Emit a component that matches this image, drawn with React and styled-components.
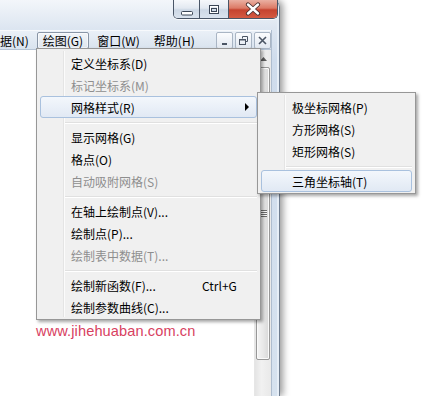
import React from 'react';
import styled, { createGlobalStyle } from 'styled-components';

const GlobalStyle = createGlobalStyle`
  html, body {
    margin: 0;
    padding: 0;
    background: #ffffff;
  }
  body {
    width: 435px;
    height: 396px;
    overflow: hidden;
    font-family: "Noto Sans CJK SC", "Noto Sans", sans-serif;
  }
`;

const Page = styled.div`
  display: flex;
  width: 435px;
  height: 396px;
  overflow: hidden;
  background: #ffffff;
`;

const Window = styled.div`
  position: relative;
  flex: none;
  width: 280px;
  height: 396px;
  box-sizing: border-box;
  display: flex;
  flex-direction: column;
  background: linear-gradient(#f3f6fa, #dde6f1 28px, #cfdcec 60px, #d6e2ef);
  border-top-right-radius: 7px;
  box-shadow: inset -1px 0 0 #6f7d8f, inset -3px 0 0 #e6eef7, 3px 0 7px rgba(0, 0, 0, 0.4);
`;

const TitleBar = styled.div`
  height: 30px;
  flex: none;
  display: flex;
  justify-content: flex-end;
  align-items: flex-start;
  padding-right: 2px;
`;

const CaptionGroup = styled.div`
  display: flex;
  height: 18px;
  border: 1px solid #4a5667;
  border-top: none;
  border-radius: 0 0 5px 5px;
  overflow: hidden;
  box-shadow: 0 1px 0 rgba(255, 255, 255, 0.8);
`;

const CaptionButton = styled.div`
  width: ${p => p.$w}px;
  display: flex;
  align-items: center;
  justify-content: center;
  background: ${p => (p.$close
    ? 'linear-gradient(#eab0a2, #dc7a66 45%, #c5432f 55%, #d45a42)'
    : 'linear-gradient(#f6f8fb, #e3e9f1 45%, #cdd8e5 55%, #dae3ee)')};
  & + & {
    border-left: 1px solid #4a5667;
  }
`;

const Client = styled.div`
  flex: 1;
  min-height: 0;
  display: flex;
  flex-direction: column;
  margin-right: 8px;
  border-right: 1px solid #aebdcf;
`;

const MenuBar = styled.div`
  height: 18px;
  flex: none;
  display: flex;
  align-items: center;
  background: linear-gradient(#eaf0f7, #d9e3ee);
  border-top: 1px solid #f7f9fc;
  border-bottom: 1px solid #b7c4d4;
  font-size: 12px;
  color: #000;
`;

const BarItem = styled.div`
  height: 15px;
  padding: 0 5px;
  display: flex;
  align-items: center;
  white-space: nowrap;
  border: 1px solid ${p => (p.$open ? '#8995a6' : 'transparent')};
  border-radius: 2px;
  background: ${p => (p.$open ? 'linear-gradient(#f1f4f8, #dfe6ee)' : 'none')};
  box-shadow: ${p => (p.$open ? 'inset 0 0 0 1px rgba(255,255,255,0.6)' : 'none')};
  & + & {
    margin-left: 2px;
  }
  &:first-child {
    margin-left: -18px;
  }
`;

const MdiButtons = styled.div`
  margin-left: auto;
  display: flex;
  gap: 2px;
`;

const MdiButton = styled.div`
  width: 15px;
  height: 15px;
  border: 1px solid #a9b5c4;
  border-radius: 2px;
  background: linear-gradient(#fbfcfe, #e2e8f0);
  display: flex;
  align-items: center;
  justify-content: center;
`;

const Body = styled.div`
  flex: 1;
  min-height: 0;
  display: flex;
  background: #ffffff;
`;

const Document = styled.div`
  flex: 1;
  padding: 272px 0 0 36px;
`;

const Url = styled.div`
  font-family: "Liberation Sans", Arial, sans-serif;
  font-size: 14.6px;
  line-height: 18px;
  color: #d8415f;
  letter-spacing: 0.1px;
`;

const Scrollbar = styled.div`
  width: 16px;
  flex: none;
  display: flex;
  flex-direction: column;
  background: linear-gradient(90deg, #e4e4e4, #f1f1f1 40%, #e9e9e9);
  border-left: 1px solid #e6e6e6;
`;

const ScrollArrow = styled.div`
  height: 17px;
  display: flex;
  align-items: center;
  justify-content: center;
`;

const Thumb = styled.div`
  height: 291px;
  margin: 0 1px;
  border: 1px solid #979797;
  border-radius: 2px;
  background: linear-gradient(90deg, #f4f4f4, #e8e8e8 50%, #d8d8d8);
  box-shadow: inset 0 0 0 1px #fafafa;
  display: flex;
  align-items: center;
  justify-content: center;
`;

const Grip = styled.div`
  width: 7px;
  height: 7px;
  background: repeating-linear-gradient(#6d6d6d 0 1px, #f6f6f6 1px 2px);
`;

const Menu = styled.div`
  position: absolute;
  z-index: ${p => p.$z || 2};
  left: ${p => p.$left}px;
  top: ${p => p.$top}px;
  width: ${p => p.$width}px;
  box-sizing: border-box;
  padding: 3px 3px 1px;
  background: #f0f0f0;
  border: 1px solid #979797;
  box-shadow: 2px 2px 3px rgba(0, 0, 0, 0.35);
  font-size: 12px;
  &::before {
    content: '';
    position: absolute;
    left: 26px;
    top: 2px;
    bottom: 2px;
    width: 1px;
    background: #e4e4e4;
    box-shadow: 1px 0 0 #fbfbfb;
  }
`;

const Item = styled.div`
  position: relative;
  height: 22px;
  box-sizing: border-box;
  padding-left: 30px;
  display: flex;
  align-items: center;
  white-space: nowrap;
  border: 1px solid ${p => (p.$active ? '#a9c1de' : 'transparent')};
  border-radius: 3px;
  background: ${p => (p.$active ? 'linear-gradient(#f3f7fc, #e1e9f4)' : 'transparent')};
  color: ${p => (p.$disabled ? '#8e8e8e' : '#000')};
`;

const Shortcut = styled.span`
  margin-left: auto;
  width: 54px;
`;

const SubArrow = styled.span`
  position: absolute;
  right: 7px;
  top: 6px;
  width: 0;
  height: 0;
  border-top: 4px solid transparent;
  border-bottom: 4px solid transparent;
  border-left: 4px solid #000;
`;

const Separator = styled.div`
  height: 8px;
  margin-left: 23px;
  display: flex;
  align-items: center;
  &::after {
    content: '';
    flex: 1;
    height: 1px;
    background: #e0e0e0;
    box-shadow: 0 1px 0 #ffffff;
  }
`;

const SubMenu = styled(Menu)`
  left: 216px;
  top: -5px;
  z-index: 3;
`;

const MinGlyph = () => (
  <svg width="14" height="16" viewBox="0 0 14 16">
    <rect x="1.5" y="10.5" width="11" height="3.5" rx="1" fill="#fff" stroke="#3b4656" />
  </svg>
);

const MaxGlyph = () => (
  <svg width="14" height="14" viewBox="0 0 14 14">
    <rect x="2.5" y="3.5" width="9" height="8" fill="none" stroke="#3b4656" />
    <rect x="3.5" y="4.5" width="7" height="6" fill="none" stroke="#fff" />
    <rect x="4.5" y="6.5" width="5" height="3" fill="none" stroke="#3b4656" />
  </svg>
);

const CloseGlyph = () => (
  <svg width="16" height="14" viewBox="0 0 16 14">
    <path d="M3 2.5 L13 11.5 M13 2.5 L3 11.5" stroke="#4a3030" strokeWidth="4.2" strokeLinecap="round" />
    <path d="M3 2.5 L13 11.5 M13 2.5 L3 11.5" stroke="#ffffff" strokeWidth="2.4" strokeLinecap="round" />
  </svg>
);

const MdiMin = () => (
  <svg width="9" height="9" viewBox="0 0 9 9">
    <rect x="2" y="7" width="5" height="2" fill="#4b5564" />
  </svg>
);

const MdiRestore = () => (
  <svg width="9" height="9" viewBox="0 0 9 9">
    <path d="M3.5 2.5 V0.5 H8.5 V5.5 H6.5" fill="none" stroke="#4b5564" />
    <rect x="0.5" y="3.5" width="6" height="5" fill="none" stroke="#4b5564" />
    <rect x="0.5" y="3.5" width="6" height="1" fill="#4b5564" />
  </svg>
);

const MdiClose = () => (
  <svg width="9" height="9" viewBox="0 0 9 9">
    <path d="M1 1 L8 8 M8 1 L1 8" stroke="#4b5564" strokeWidth="1.6" />
  </svg>
);

const UpArrow = () => (
  <svg width="7" height="4" viewBox="0 0 7 4">
    <path d="M0 4 L3.5 0 L7 4 Z" fill="#5f5f5f" />
  </svg>
);

const App = () => (
  <Page>
    <GlobalStyle />
    <Window>
      <TitleBar>
        <CaptionGroup>
          <CaptionButton $w={25}><MinGlyph /></CaptionButton>
          <CaptionButton $w={28}><MaxGlyph /></CaptionButton>
          <CaptionButton $w={48} $close><CloseGlyph /></CaptionButton>
        </CaptionGroup>
      </TitleBar>
      <Client>
        <MenuBar>
          <BarItem>数据(N)</BarItem>
          <BarItem $open>绘图(G)</BarItem>
          <BarItem>窗口(W)</BarItem>
          <BarItem>帮助(H)</BarItem>
          <MdiButtons>
            <MdiButton><MdiMin /></MdiButton>
            <MdiButton><MdiRestore /></MdiButton>
            <MdiButton><MdiClose /></MdiButton>
          </MdiButtons>
        </MenuBar>
        <Body>
          <Document>
            <Url>www.jihehuaban.com.cn</Url>
          </Document>
          <Scrollbar>
            <ScrollArrow><UpArrow /></ScrollArrow>
            <Thumb><Grip /></Thumb>
          </Scrollbar>
        </Body>
      </Client>
      <Menu $left={36} $top={48} $width={225}>
        <Item>定义坐标系(D)</Item>
        <Item $disabled>标记坐标系(M)</Item>
        <Item $active>
          网格样式(R)
          <SubArrow />
          <SubMenu $width={159}>
            <Item>极坐标网格(P)</Item>
            <Item>方形网格(S)</Item>
            <Item>矩形网格(S)</Item>
            <Separator />
            <Item $active>三角坐标轴(T)</Item>
          </SubMenu>
        </Item>
        <Separator />
        <Item>显示网格(G)</Item>
        <Item>格点(O)</Item>
        <Item $disabled>自动吸附网格(S)</Item>
        <Separator />
        <Item>在轴上绘制点(V)...</Item>
        <Item>绘制点(P)...</Item>
        <Item $disabled>绘制表中数据(T)...</Item>
        <Separator />
        <Item>
          绘制新函数(F)...
          <Shortcut>Ctrl+G</Shortcut>
        </Item>
        <Item>绘制参数曲线(C)...</Item>
      </Menu>
    </Window>
  </Page>
);

export default App;
